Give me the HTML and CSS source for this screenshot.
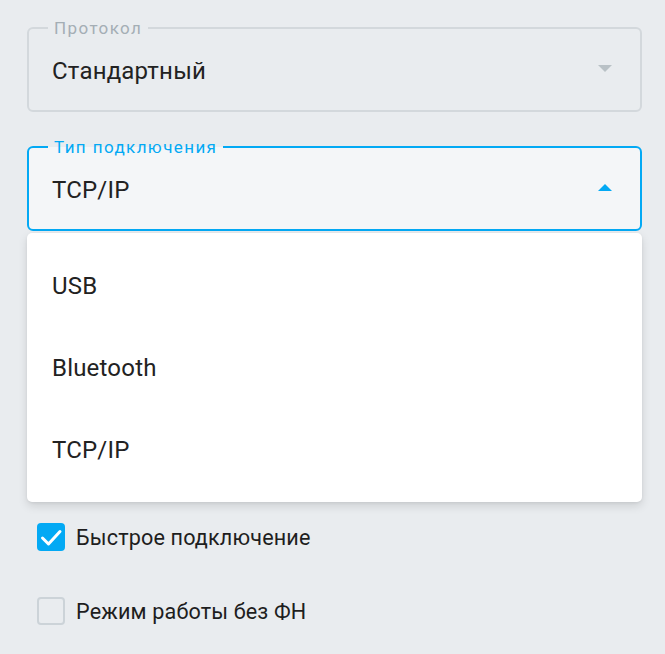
FILE: index.html
```html
<!DOCTYPE html>
<html lang="ru">
<head>
<meta charset="utf-8">
<link rel="stylesheet" href="styles.css">
</head>
<body>
<div class="page">
  <div class="field">
    <span class="label">Протокол</span>
    <span class="value">Стандартный</span>
    <span class="arrow down"></span>
  </div>
  <div class="select-wrap">
    <div class="field active">
      <span class="label">Тип подключения</span>
      <span class="value">TCP/IP</span>
      <span class="arrow up"></span>
    </div>
    <div class="menu">
      <div class="item">USB</div>
      <div class="item">Bluetooth</div>
      <div class="item">TCP/IP</div>
    </div>
  </div>
  <div class="checks">
    <label class="check">
      <span class="box checked">
        <svg width="28" height="28" viewBox="0 0 28 28"><path d="M5.5 15 L11.5 21 L23 8.5" fill="none" stroke="#fff" stroke-width="3" stroke-linecap="round" stroke-linejoin="round"/></svg>
      </span>
      <span class="check-text">Быстрое подключение</span>
    </label>
    <label class="check">
      <span class="box"></span>
      <span class="check-text">Режим работы без ФН</span>
    </label>
  </div>
</div>
</body>
</html>
```

FILE: styles.css
```css
* { box-sizing: border-box; }
html, body {
  margin: 0;
  padding: 0;
  background: #e9ecef;
  font-family: Roboto, "Noto Sans", sans-serif;
  color: #222;
}
.page {
  padding: 27px 23px 0 27px;
  display: flex;
  flex-direction: column;
}
.field {
  position: relative;
  height: 85px;
  border: 2px solid #d3d8dc;
  border-radius: 6px;
  background: #e9ecef;
  display: flex;
  align-items: center;
  padding: 0 28px 0 23px;
}
.field .label {
  position: absolute;
  left: 19px;
  top: -12px;
  padding: 0 6px;
  background: #e9ecef;
  font-size: 17px;
  line-height: 22px;
  letter-spacing: 1.4px;
  color: #a4aeb5;
}
.field .value {
  flex: 1;
  font-size: 24px;
  letter-spacing: 0.2px;
  margin-top: 3px;
}
.arrow {
  width: 0;
  height: 0;
  border-left: 7px solid transparent;
  border-right: 7px solid transparent;
}
.arrow.down {
  border-top: 7px solid #b9c1c6;
  margin-top: -2px;
}
.arrow.up {
  border-bottom: 7px solid #03a9f4;
  margin-top: -2px;
}
.select-wrap {
  margin-top: 34px;
  position: relative;
}
.field.active {
  border-color: #03a9f4;
  background: #f4f6f8;
}
.field.active .label {
  color: #03a9f4;
  background: linear-gradient(#e9ecef 50%, #f4f6f8 50%);
}
.menu {
  position: absolute;
  left: 0;
  right: 0;
  top: 87px;
  background: #fff;
  border-radius: 5px;
  box-shadow: 0 4px 10px rgba(0, 0, 0, 0.12), 0 1px 3px rgba(0, 0, 0, 0.06);
  padding: 12px 0 11px;
  z-index: 2;
}
.item {
  height: 82px;
  display: flex;
  align-items: center;
  padding-left: 25px;
  font-size: 24px;
  letter-spacing: 0.2px;
  color: #222;
}
.checks {
  margin-top: 292px;
  padding-left: 10px;
  display: flex;
  flex-direction: column;
  gap: 46px;
}
.check {
  display: flex;
  align-items: center;
  gap: 11px;
  height: 28px;
}
.box {
  width: 28px;
  height: 28px;
  border-radius: 4px;
  border: 2px solid #ccd3d8;
  background: #e9ecef;
  flex: none;
}
.box svg { display: block; }
.box.checked {
  background: #03a9f4;
  border: none;
}
.check-text {
  font-size: 21.6px;
  letter-spacing: 0.15px;
  color: #1e1e1e;
}
```
